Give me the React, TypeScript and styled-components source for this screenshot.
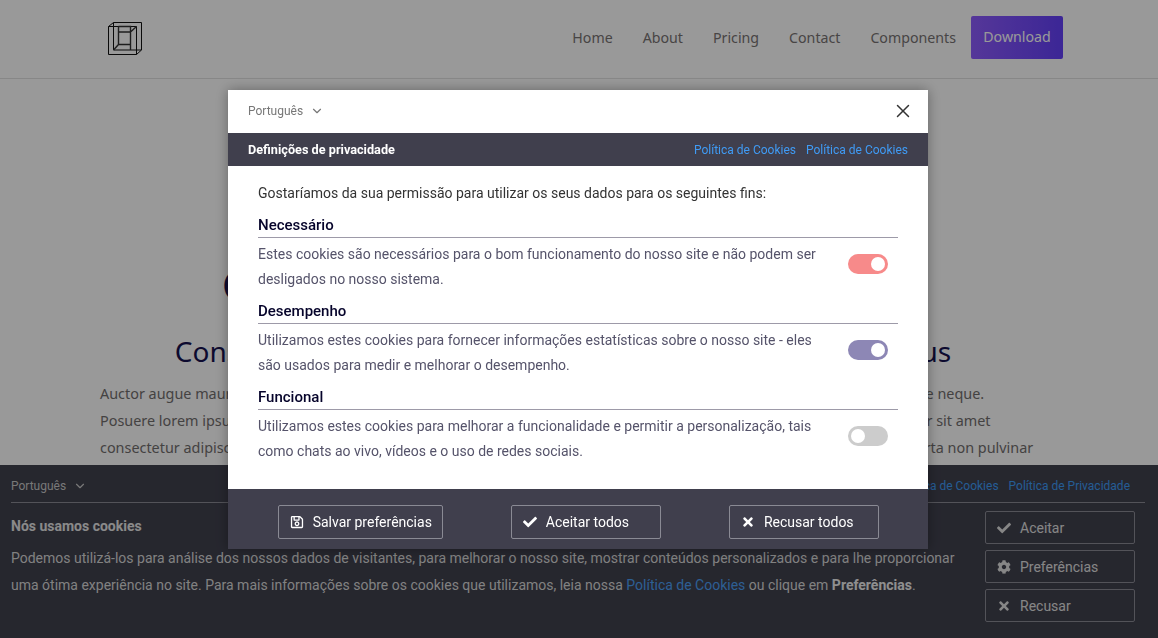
import React from "react";
import styled, { createGlobalStyle } from "styled-components";
import { ChevronDown, X } from "lucide-react";
import { FaCheck, FaCog, FaRegSave, FaTimes } from "react-icons/fa";

const GlobalStyle = createGlobalStyle`
	html, body {
		margin: 0;
		height: 100%;
		overflow: hidden;
		background: #fff;
	}
	* {
		box-sizing: border-box;
	}
`;

const pageFont = `"Noto Sans", "Open Sans", sans-serif`;
const uiFont = `Roboto, "Liberation Sans", sans-serif`;

const Header = styled.header`
	height: 79px;
	border-bottom: 1px solid #e2e2e2;
	padding: 0 95px 0 108px;
	display: flex;
	align-items: center;
	justify-content: space-between;
	font-family: ${pageFont};
`;

const Logo = styled.svg`
	width: 34px;
	height: 34px;
	margin-top: -1px;
	display: block;
`;

const TopNav = styled.nav`
	display: flex;
	align-items: center;
	margin-top: -3px;
`;

const NavLink = styled.a`
	font-size: 14.2px;
	color: #787373;
	margin-right: 30px;
	&:nth-child(5) {
		margin-right: 15px;
	}
`;

const Download = styled.a`
	width: 92px;
	height: 43px;
	display: flex;
	align-items: center;
	justify-content: center;
	padding-bottom: 2px;
	border-radius: 2px;
	color: #fff;
	font-size: 14.2px;
	background: linear-gradient(90deg, #8e5cff, #6440fa);
`;

const Hero = styled.main`
	font-family: ${pageFont};
	padding: 0 100px;
`;

const BigTitle = styled.h1`
	margin: 181px 32px 0 0;
	font-size: 40px;
	line-height: 50px;
	font-weight: 500;
	color: #16124f;
	text-align: center;
	white-space: nowrap;
`;

const SubTitle = styled.h2`
	margin: 21px 32px 0 0;
	font-size: 28px;
	line-height: 40px;
	font-weight: 400;
	color: #16124f;
	text-align: center;
	white-space: nowrap;
`;

const Lines = styled.div`
	margin-top: 9px;
	font-size: 14.4px;
	line-height: 27px;
	color: #726e6e;
	white-space: nowrap;
`;

const Banner = styled.section`
	position: fixed;
	left: 0;
	right: 0;
	bottom: 0;
	height: 173px;
	padding: 0 13px 0 11px;
	background: #40414e;
	font-family: ${uiFont};
	color: #fff;
`;

const BannerTop = styled.div`
	height: 38px;
	display: flex;
	align-items: center;
	justify-content: space-between;
	border-bottom: 1px solid #8a8a94;
	padding: 3px 15px 0 0;
	margin-bottom: 8px;
`;

const Lang = styled.div<{ $dark?: boolean }>`
	display: flex;
	align-items: center;
	gap: 7px;
	margin-top: ${(p) => (p.$dark ? "0" : "1px")};
	font-size: 12px;
	color: ${(p) => (p.$dark ? "#777" : "#c9c9c9")};
`;

const Links = styled.div`
	display: flex;
	gap: 10px;
	margin-top: 1px;
	font-size: 12px;
	color: #3f9bf5;
`;

const BannerBody = styled.div`
	display: flex;
	justify-content: space-between;
	padding-right: 10px;
`;

const BannerText = styled.div`
	width: 950px;
`;

const BannerTitle = styled.div`
	font-size: 14px;
	font-weight: 700;
	line-height: 20px;
	margin-top: 5px;
	color: #e6e6e6;
`;

const BannerCopy = styled.p`
	margin: 9px 0 0;
	font-size: 14px;
	line-height: 26.5px;
	color: #d8d8d8;
	a {
		color: #4c9ff5;
	}
	b {
		color: #eee;
	}
`;

const BannerActions = styled.div`
	width: 150px;
	display: flex;
	flex-direction: column;
	gap: 6px;
`;

const Action = styled.button`
	height: 33px;
	display: flex;
	align-items: center;
	gap: 9px;
	padding: 0 11px;
	background: transparent;
	border: 1px solid #8a8a94;
	border-radius: 2px;
	font-family: ${uiFont};
	font-size: 14px;
	color: #e0e0e0;
	svg {
		width: 14px;
		height: 14px;
	}
`;

const Overlay = styled.div`
	position: fixed;
	inset: 0;
	padding-right: 2px;
	display: flex;
	align-items: center;
	justify-content: center;
	background: rgba(0, 0, 0, 0.4);
`;

const Modal = styled.div`
	width: 700px;
	background: #fff;
	font-family: ${uiFont};
	box-shadow: 0 0 12px rgba(0, 0, 0, 0.35);
`;

const ModalTop = styled.div`
	height: 43px;
	padding: 0 14px 0 20px;
	display: flex;
	align-items: center;
	justify-content: space-between;
`;

const CloseIcon = styled(X)`
	display: block;
	color: #333;
`;

const ModalHead = styled.div`
	height: 33px;
	padding: 0 20px;
	background: #403f4d;
	display: flex;
	align-items: center;
	justify-content: space-between;
	color: #fff;
`;

const ModalTitle = styled.div`
	font-size: 12.7px;
	font-weight: 700;
`;

const ModalBody = styled.div`
	padding: 15px 30px 25px;
`;

const Intro = styled.p`
	margin: 0 0 8px;
	font-size: 14px;
	line-height: 25px;
	color: #333;
`;

const Section = styled.div`
	margin-bottom: 8px;
	&:last-child {
		margin-bottom: 0;
	}
`;

const SectionTitle = styled.div`
	height: 24px;
	line-height: 22px;
	border-bottom: 1px solid #9d9aa8;
	font-size: 15px;
	font-weight: 500;
	color: #05032a;
`;

const SectionRow = styled.div`
	display: flex;
	padding: 4px 10px 0 0;
`;

const SectionText = styled.p`
	margin: 0;
	width: 570px;
	margin-right: 20px;
	font-size: 14px;
	line-height: 25px;
	color: #55536a;
`;

const Toggle = styled.div<{ $color: string; $on: boolean }>`
	width: 40px;
	height: 20px;
	margin-top: 12px;
	border-radius: 10px;
	padding: 3px;
	display: flex;
	justify-content: ${(p) => (p.$on ? "flex-end" : "flex-start")};
	background: ${(p) => p.$color};
	&::after {
		content: "";
		width: 14px;
		height: 14px;
		border-radius: 50%;
		background: #fff;
	}
`;

const ModalFooter = styled.div`
	height: 60px;
	padding: 6px 15px 0 15.6px;
	background: #403f4d;
	display: flex;
	align-items: center;
	justify-content: space-around;
`;

const FooterButton = styled.button<{ $wide?: boolean }>`
	width: ${(p) => (p.$wide ? "165px" : "150px")};
	height: 34px;
	display: flex;
	align-items: center;
	gap: 9px;
	padding: 0 0 0 11px;
	background: transparent;
	border: 1px solid #8a8a94;
	border-radius: 2px;
	font-family: ${uiFont};
	font-size: 14px;
	white-space: nowrap;
	color: #fff;
	svg {
		flex-shrink: 0;
		width: 14px;
		height: 14px;
	}
`;

const sections = [
	{
		title: "Necessário",
		text: "Estes cookies são necessários para o bom funcionamento do nosso site e não podem ser desligados no nosso sistema.",
		color: "#f78a8a",
		on: true,
	},
	{
		title: "Desempenho",
		text: "Utilizamos estes cookies para fornecer informações estatísticas sobre o nosso site - eles são usados para medir e melhorar o desempenho.",
		color: "#8d87b5",
		on: true,
	},
	{
		title: "Funcional",
		text: "Utilizamos estes cookies para melhorar a funcionalidade e permitir a personalização, tais como chats ao vivo, vídeos e o uso de redes sociais.",
		color: "#cccccc",
		on: false,
	},
];

function App() {
	return (
		<>
			<GlobalStyle />
			<Header>
				<Logo viewBox="0 0 34 34" fill="none" stroke="#111" strokeWidth="1">
					<path d="M.5 4.5h28v28H.5zM5.5 28V.5h28V28h-28zM.5 4.5l5-4M28.5 32.5l5-4.5" />
					<path
						d="M10.5 4.5h12v23.5M10.5 4.5V22.5h12M10.5 10h12M22.5 10l6-5.5M5.5 28l5-5.5"
						stroke="#333"
						strokeWidth="1.4"
					/>
				</Logo>
				<TopNav>
					<NavLink>Home</NavLink>
					<NavLink>About</NavLink>
					<NavLink>Pricing</NavLink>
					<NavLink>Contact</NavLink>
					<NavLink>Components</NavLink>
					<Download>Download</Download>
				</TopNav>
			</Header>
			<Hero>
				<BigTitle>Components for your next websites</BigTitle>
				<SubTitle>Consectetur adipiscing elit sed do eiusmod tempor tempus</SubTitle>
				<Lines>
					<div>Auctor augue mauris augue neque gravida in fermentum et sollicitudin ac orci phasellus egestas tellus mauris pellentesque neque.</div>
					<div>Posuere lorem ipsum dolor sit amet consectetur adipiscing elit duis tristique sollicitudin nibh sit amet commodo nulla dolor sit amet</div>
					<div>consectetur adipiscing elit pellentesque habitant morbi tristique senectus et netus et malesuada fames ac a turpis eget porta non pulvinar</div>
				</Lines>
			</Hero>
			<Banner>
				<BannerTop>
					<Lang>
						Português <ChevronDown size={14} />
					</Lang>
					<Links>
						<span>Política de Cookies</span>
						<span>Política de Privacidade</span>
					</Links>
				</BannerTop>
				<BannerBody>
					<BannerText>
						<BannerTitle>Nós usamos cookies</BannerTitle>
						<BannerCopy>
							Podemos utilizá-los para análise dos nossos dados de visitantes, para melhorar o nosso site, mostrar conteúdos personalizados e para lhe proporcionar uma ótima experiência no site. Para mais informações sobre os cookies que utilizamos, leia nossa <a>Política de Cookies</a> ou clique em <b>Preferências</b>.
						</BannerCopy>
					</BannerText>
					<BannerActions>
						<Action>
							<FaCheck /> Aceitar
						</Action>
						<Action>
							<FaCog /> Preferências
						</Action>
						<Action>
							<FaTimes /> Recusar
						</Action>
					</BannerActions>
				</BannerBody>
			</Banner>
			<Overlay>
				<Modal>
					<ModalTop>
						<Lang $dark>
							Português <ChevronDown size={14} />
						</Lang>
						<CloseIcon size={22} strokeWidth={1.6} />
					</ModalTop>
					<ModalHead>
						<ModalTitle>Definições de privacidade</ModalTitle>
						<Links>
							<span>Política de Cookies</span>
							<span>Política de Cookies</span>
						</Links>
					</ModalHead>
					<ModalBody>
						<Intro>Gostaríamos da sua permissão para utilizar os seus dados para os seguintes fins:</Intro>
						{sections.map((s) => (
							<Section key={s.title}>
								<SectionTitle>{s.title}</SectionTitle>
								<SectionRow>
									<SectionText>{s.text}</SectionText>
									<Toggle $color={s.color} $on={s.on} />
								</SectionRow>
							</Section>
						))}
					</ModalBody>
					<ModalFooter>
						<FooterButton $wide>
							<FaRegSave /> Salvar preferências
						</FooterButton>
						<FooterButton>
							<FaCheck /> Aceitar todos
						</FooterButton>
						<FooterButton>
							<FaTimes /> Recusar todos
						</FooterButton>
					</ModalFooter>
				</Modal>
			</Overlay>
		</>
	);
}

export default App;
